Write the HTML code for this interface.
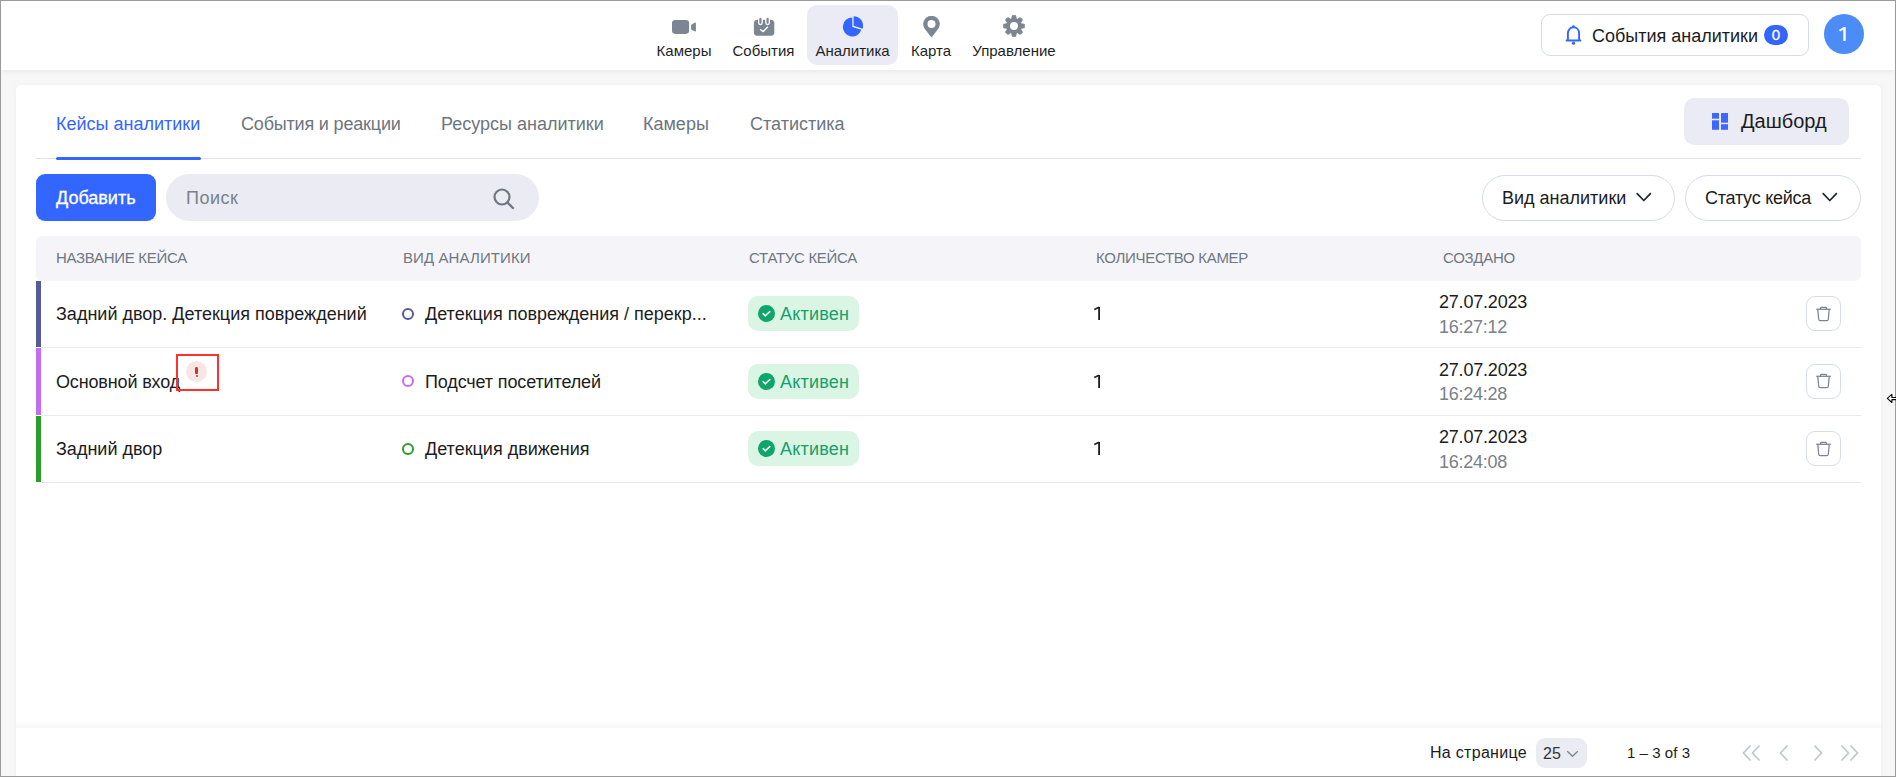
<!DOCTYPE html>
<html><head><meta charset="utf-8">
<style>
*{box-sizing:border-box;margin:0;padding:0}
html,body{width:1896px;height:777px;overflow:hidden}
body{font-family:"Liberation Sans",sans-serif;background:#f7f7f8;position:relative;color:#1c1c1e}
.frame{position:absolute;left:0;top:0;width:1896px;height:777px;border:1px solid #9b9b9b;pointer-events:none;z-index:50}
.abs{position:absolute}
.hdr{position:absolute;left:1px;top:1px;width:1894px;height:69px;background:#fff;box-shadow:0 1px 6px rgba(0,0,0,.075)}
.nav{position:absolute;top:0;height:70px;text-align:center;font-size:15px;color:#1f1f1f;white-space:nowrap}
.nav .lbl{position:absolute;left:0;right:0;top:42px;line-height:18px}
.nav svg{position:absolute;top:16px;left:50%;transform:translateX(-50%)}
.card{position:absolute;left:16px;top:85px;width:1865px;height:700px;background:#fff;border-radius:5px;box-shadow:0 0 5px rgba(0,0,0,.045)}
.tab{position:absolute;top:113px;font-size:18px;line-height:22px;color:#6c7580;white-space:nowrap}
.txt{position:absolute;white-space:nowrap}
.td{position:absolute;font-size:18px;line-height:22px;color:#1c1c1e;white-space:nowrap}
.chip{width:111px;height:35px;border-radius:10px;background:#dbf5e5;color:#13a06a;font-size:18px;line-height:22px;white-space:nowrap;letter-spacing:0.2px}
.th{position:absolute;top:249px;font-size:15px;letter-spacing:-0.3px;line-height:18px;color:#6f7782;white-space:nowrap}
</style></head><body>
<div class="hdr"></div>
<!-- nav -->
<div class="nav" style="left:648px;width:72px">
  <svg width="26" height="20" viewBox="0 0 26 20" style="top:18px"><rect x="1" y="2" width="17.1" height="13.9" rx="3.3" fill="#7b8692"/><path d="M20.1 7.1L23.9 4.6Q24.9 4.0 24.9 5.2V12.8Q24.9 14.0 23.9 13.4L20.1 11.6Z" fill="#7b8692"/></svg>
  <div class="lbl">Камеры</div>
</div>
<div class="nav" style="left:727px;width:73px">
  <svg width="22" height="22" viewBox="0 0 22 22" style="top:16px"><rect x="0.9" y="3.7" width="20.4" height="16.1" rx="3.5" fill="#7b8692"/><rect x="5" y="0.6" width="4.8" height="8.6" rx="2.4" fill="#fff"/><rect x="12.2" y="0.6" width="4.8" height="8.6" rx="2.4" fill="#fff"/><rect x="6.3" y="1.8" width="2.2" height="6.1" rx="1.1" fill="#7b8692"/><rect x="13.5" y="1.8" width="2.2" height="6.1" rx="1.1" fill="#7b8692"/><path d="M7.6 13.7L10.3 15.6L14.4 11.3" fill="none" stroke="#fff" stroke-width="1.4" stroke-linecap="round" stroke-linejoin="round"/></svg>
  <div class="lbl">События</div>
</div>
<div class="nav" style="left:807px;width:91px;top:5px;height:60px;background:#ebebf5;border-radius:10px">
  <svg width="22" height="22" viewBox="0 0 22 22" style="top:11px;margin-left:-0.6px"><path d="M11.3 10.9L11.3 1.4A9.5 9.5 0 1 0 20.335 13.836Z" fill="#3366ff"/><path d="M12.6 9.7L12.6 0.2A9.5 9.5 0 0 1 21.635 12.636Z" fill="#3366ff"/></svg>
  <div class="lbl" style="top:37px">Аналитика</div>
</div>
<div class="nav" style="left:904px;width:54px">
  <svg width="19" height="23" viewBox="0 0 19 23" style="top:16px;left:18px;transform:none"><path d="M9.5 21.2L3.2 12.9A8 8 0 1 1 15.8 12.9Z" fill="#7b8692" stroke="#7b8692" stroke-width="0.6" stroke-linejoin="round"/><circle cx="9.5" cy="8" r="4" fill="#fff"/></svg>
  <div class="lbl">Карта</div>
</div>
<div class="nav" style="left:966px;width:96px">
  <svg width="22" height="22" viewBox="0 0 22 22" style="top:15px"><g fill="#7b8692"><circle cx="11" cy="11" r="7.6"/><g id="t" stroke="#7b8692" stroke-width="0.8" stroke-linejoin="round"><path d="M9.3 0.6H12.7L13.6 5H8.4Z"/><path d="M9.3 21.4H12.7L13.6 17H8.4Z"/></g><use href="#t" transform="rotate(45 11 11)"/><use href="#t" transform="rotate(90 11 11)"/><use href="#t" transform="rotate(135 11 11)"/></g><circle cx="11" cy="11" r="4" fill="#fff"/></svg>
  <div class="lbl">Управление</div>
</div>

<!-- header right -->
<div class="abs" style="left:1541px;top:14px;width:268px;height:42px;border:1px solid #d6dbe6;border-radius:9px;background:#fff"></div>
<svg class="abs" style="left:1563px;top:25px" width="21" height="21" viewBox="0 0 21 21"><path d="M4.9 15.2V8.4C4.9 4.9 7.2 2.3 10.5 2.3S16.1 4.9 16.1 8.4V15.2" fill="none" stroke="#3366ff" stroke-width="1.9"/><path d="M3.6 15.4H17.4" stroke="#3366ff" stroke-width="2" stroke-linecap="round"/><circle cx="10.5" cy="1.7" r="1.4" fill="#3366ff"/><circle cx="10.5" cy="18.2" r="1.6" fill="#3366ff"/></svg>
<div class="txt" style="left:1592px;top:25px;font-size:18px;line-height:22px;color:#1c1c1e">События аналитики</div>
<div class="abs" style="left:1764px;top:25px;width:24px;height:20px;border-radius:10px;background:#3366ff;color:#fff;font-size:15px;line-height:20px;text-align:center;-webkit-text-stroke:0.3px #fff">0</div>
<div class="abs" style="left:1824px;top:14px;width:40px;height:40px;border-radius:50%;background:#4b8cf7"></div><svg class="abs" style="left:1838px;top:26px" width="10" height="16" viewBox="0 0 10 16"><rect x="5.3" y="1" width="2.4" height="14" fill="#fff"/><path d="M1.5 4.6L7 1.6" stroke="#fff" stroke-width="1.9"/></svg>

<div class="card"></div>
<!-- tabs -->
<div class="tab" style="left:56px;color:#3366ff">Кейсы аналитики</div>
<div class="tab" style="left:241px;letter-spacing:-0.18px">События и реакции</div>
<div class="tab" style="left:441px">Ресурсы аналитики</div>
<div class="tab" style="left:643px">Камеры</div>
<div class="tab" style="left:750px">Статистика</div>
<div class="abs" style="left:36px;top:158px;width:1825px;height:1px;background:#dfe4ea"></div>
<div class="abs" style="left:56px;top:157px;width:145px;height:3px;border-radius:2px;background:#3366ff"></div>
<!-- dashboard btn -->
<div class="abs" style="left:1684px;top:98px;width:165px;height:47px;border-radius:10px;background:#ebebf5"></div>
<svg class="abs" style="left:1712px;top:113px" width="17" height="17" viewBox="0 0 17 17"><g fill="#3f67ff"><rect x="0" y="0" width="7" height="5.7"/><rect x="0" y="7.3" width="7" height="9.5"/><rect x="9" y="0" width="7" height="9.7"/><rect x="9" y="11.2" width="7" height="5.6"/></g></svg>
<div class="txt" style="left:1741px;top:109px;font-size:20px;line-height:24px;color:#1c1c1e">Дашборд</div>
<!-- toolbar -->
<div class="abs" style="left:36px;top:174px;width:120px;height:47px;border-radius:9px;background:#3366ff"></div>
<div class="txt" style="left:56px;top:187px;font-size:18px;line-height:22px;color:#fff;-webkit-text-stroke:0.3px #fff">Добавить</div>
<div class="abs" style="left:166px;top:174px;width:373px;height:47px;border-radius:24px;background:#ebebf3"></div>
<div class="txt" style="left:186px;top:187px;font-size:18px;line-height:22px;color:#7a8189;letter-spacing:0.5px">Поиск</div>
<svg class="abs" style="left:492px;top:187px" width="24" height="24" viewBox="0 0 24 24"><circle cx="10" cy="10" r="7.5" fill="none" stroke="#6f7780" stroke-width="2.2"/><path d="M15.5 15.5L21 21" stroke="#6f7780" stroke-width="2.4" stroke-linecap="round"/></svg>
<div class="abs" style="left:1482px;top:175px;width:193px;height:46px;border-radius:23px;border:1px solid #d6dbe6"></div>
<div class="txt" style="left:1502px;top:187px;font-size:18px;line-height:22px;color:#1c1c1e">Вид аналитики</div>
<svg class="abs" style="left:1635px;top:190px" width="18" height="13" viewBox="0 0 18 13"><path d="M2.2 3.7L8.8 10.5L15.4 3.7" fill="none" stroke="#22242e" stroke-width="1.7" stroke-linecap="round" stroke-linejoin="round"/></svg>
<div class="abs" style="left:1685px;top:175px;width:176px;height:46px;border-radius:23px;border:1px solid #d6dbe6"></div>
<div class="txt" style="left:1705px;top:187px;font-size:18px;line-height:22px;color:#1c1c1e;letter-spacing:-0.25px">Статус кейса</div>
<svg class="abs" style="left:1821px;top:190px" width="18" height="13" viewBox="0 0 18 13"><path d="M2.2 3.7L8.8 10.5L15.4 3.7" fill="none" stroke="#22242e" stroke-width="1.7" stroke-linecap="round" stroke-linejoin="round"/></svg>
<!-- table header -->
<div class="abs" style="left:36px;top:236px;width:1825px;height:45px;border-radius:6px;background:#f5f5f9"></div>
<div class="th" style="left:56px">НАЗВАНИЕ КЕЙСА</div>
<div class="th" style="left:403px;letter-spacing:0.1px">ВИД АНАЛИТИКИ</div>
<div class="th" style="left:749px">СТАТУС КЕЙСА</div>
<div class="th" style="left:1096px">КОЛИЧЕСТВО КАМЕР</div>
<div class="th" style="left:1443px">СОЗДАНО</div>
<!-- rows -->
<div class="abs" style="left:36px;top:281px;width:5px;height:66px;background:#535c94"></div>
<div class="abs" style="left:41px;top:347px;width:1820px;height:1px;background:#e8e8f0"></div>
<div class="td" style="left:56px;top:303px">Задний двор. Детекция повреждений</div>
<svg class="abs" style="left:401px;top:307px" width="14" height="14" viewBox="0 0 14 14"><circle cx="7" cy="7" r="5" fill="none" stroke="#535c94" stroke-width="2"/></svg>
<div class="td" style="left:425px;top:303px">Детекция повреждения / перекр...</div>
<div class="abs chip" style="left:748px;top:296px"><svg class="abs" style="left:10px;top:9px" width="17" height="17" viewBox="0 0 17 17"><circle cx="8.5" cy="8.5" r="8.5" fill="#0fa66b"/><path d="M5.2 8.7l2.2 2.1L11.8 6.5" fill="none" stroke="#fff" stroke-width="1.6" stroke-linecap="round" stroke-linejoin="round"/></svg><span class="abs" style="left:32px;top:7px">Активен</span></div>
<svg class="abs" style="left:1093px;top:306px" width="9" height="15" viewBox="0 0 9 15"><rect x="5.2" y="1" width="1.8" height="13" fill="#1c1c1e"/><path d="M1.3 3.5L6 1.3" stroke="#1c1c1e" stroke-width="1.5"/></svg>
<div class="td" style="left:1439px;top:291px;letter-spacing:-0.2px">27.07.2023</div>
<div class="td" style="left:1439px;top:316px;letter-spacing:-0.25px;color:#7b8089">16:27:12</div>
<div class="abs" style="left:1806px;top:296px;width:35px;height:35px;border:1px solid #d8dee8;border-radius:9px"></div>
<div class="abs" style="left:1815px;top:306px"><svg width="17" height="16" viewBox="0 0 17 16"><path d="M1.2 3.3H15.8" stroke="#7b8591" stroke-width="1.3"/><path d="M5.6 3V2.1c0-.5.3-.8.8-.8h4.2c.5 0 .8.3.8.8V3" fill="none" stroke="#7b8591" stroke-width="1.2"/><path d="M2.8 3.6L3.7 13.2c.1.9.6 1.4 1.5 1.4h6.6c.9 0 1.4-.5 1.5-1.4l.9-9.6" fill="none" stroke="#7b8591" stroke-width="1.25"/></svg></div>
<div class="abs" style="left:36px;top:348px;width:5px;height:67px;background:#c66cf2"></div>
<div class="abs" style="left:41px;top:415px;width:1820px;height:1px;background:#e8e8f0"></div>
<div class="td" style="left:56px;top:371px;letter-spacing:-0.15px">Основной вход</div>
<svg class="abs" style="left:401px;top:374px" width="14" height="14" viewBox="0 0 14 14"><circle cx="7" cy="7" r="5" fill="none" stroke="#c66cf2" stroke-width="2"/></svg>
<div class="td" style="left:425px;top:371px;letter-spacing:-0.13px">Подсчет посетителей</div>
<div class="abs chip" style="left:748px;top:364px"><svg class="abs" style="left:10px;top:9px" width="17" height="17" viewBox="0 0 17 17"><circle cx="8.5" cy="8.5" r="8.5" fill="#0fa66b"/><path d="M5.2 8.7l2.2 2.1L11.8 6.5" fill="none" stroke="#fff" stroke-width="1.6" stroke-linecap="round" stroke-linejoin="round"/></svg><span class="abs" style="left:32px;top:7px">Активен</span></div>
<svg class="abs" style="left:1093px;top:374px" width="9" height="15" viewBox="0 0 9 15"><rect x="5.2" y="1" width="1.8" height="13" fill="#1c1c1e"/><path d="M1.3 3.5L6 1.3" stroke="#1c1c1e" stroke-width="1.5"/></svg>
<div class="td" style="left:1439px;top:359px;letter-spacing:-0.2px">27.07.2023</div>
<div class="td" style="left:1439px;top:383px;letter-spacing:-0.25px;color:#7b8089">16:24:28</div>
<div class="abs" style="left:1806px;top:364px;width:35px;height:35px;border:1px solid #d8dee8;border-radius:9px"></div>
<div class="abs" style="left:1815px;top:373px"><svg width="17" height="16" viewBox="0 0 17 16"><path d="M1.2 3.3H15.8" stroke="#7b8591" stroke-width="1.3"/><path d="M5.6 3V2.1c0-.5.3-.8.8-.8h4.2c.5 0 .8.3.8.8V3" fill="none" stroke="#7b8591" stroke-width="1.2"/><path d="M2.8 3.6L3.7 13.2c.1.9.6 1.4 1.5 1.4h6.6c.9 0 1.4-.5 1.5-1.4l.9-9.6" fill="none" stroke="#7b8591" stroke-width="1.25"/></svg></div>
<div class="abs" style="left:36px;top:416px;width:5px;height:66px;background:#2a9d2a"></div>
<div class="abs" style="left:41px;top:482px;width:1820px;height:1px;background:#e8e8f0"></div>
<div class="td" style="left:56px;top:438px">Задний двор</div>
<svg class="abs" style="left:401px;top:442px" width="14" height="14" viewBox="0 0 14 14"><circle cx="7" cy="7" r="5" fill="none" stroke="#2a9d2a" stroke-width="2"/></svg>
<div class="td" style="left:425px;top:438px">Детекция движения</div>
<div class="abs chip" style="left:748px;top:431px"><svg class="abs" style="left:10px;top:9px" width="17" height="17" viewBox="0 0 17 17"><circle cx="8.5" cy="8.5" r="8.5" fill="#0fa66b"/><path d="M5.2 8.7l2.2 2.1L11.8 6.5" fill="none" stroke="#fff" stroke-width="1.6" stroke-linecap="round" stroke-linejoin="round"/></svg><span class="abs" style="left:32px;top:7px">Активен</span></div>
<svg class="abs" style="left:1093px;top:441px" width="9" height="15" viewBox="0 0 9 15"><rect x="5.2" y="1" width="1.8" height="13" fill="#1c1c1e"/><path d="M1.3 3.5L6 1.3" stroke="#1c1c1e" stroke-width="1.5"/></svg>
<div class="td" style="left:1439px;top:426px;letter-spacing:-0.2px">27.07.2023</div>
<div class="td" style="left:1439px;top:451px;letter-spacing:-0.25px;color:#7b8089">16:24:08</div>
<div class="abs" style="left:1806px;top:431px;width:35px;height:35px;border:1px solid #d8dee8;border-radius:9px"></div>
<div class="abs" style="left:1815px;top:441px"><svg width="17" height="16" viewBox="0 0 17 16"><path d="M1.2 3.3H15.8" stroke="#7b8591" stroke-width="1.3"/><path d="M5.6 3V2.1c0-.5.3-.8.8-.8h4.2c.5 0 .8.3.8.8V3" fill="none" stroke="#7b8591" stroke-width="1.2"/><path d="M2.8 3.6L3.7 13.2c.1.9.6 1.4 1.5 1.4h6.6c.9 0 1.4-.5 1.5-1.4l.9-9.6" fill="none" stroke="#7b8591" stroke-width="1.25"/></svg></div>
<!-- annotation -->
<div class="abs" style="left:186px;top:361px;width:21px;height:21px;border-radius:50%;background:#f8e6e6"></div>
<div class="abs" style="left:195.4px;top:366.5px;width:2.8px;height:7.2px;border-radius:1.4px 1.4px 1px 1px;background:#c9382e"></div>
<div class="abs" style="left:195.5px;top:374.5px;width:2.6px;height:2.4px;border-radius:1px;background:#c9382e"></div>
<div class="abs" style="left:176px;top:354px;width:43px;height:37px;border:2px solid #ff3030;z-index:5"></div>
<!-- footer -->
<div class="abs" style="left:16px;top:721px;width:1865px;height:7px;background:linear-gradient(to bottom,rgba(0,0,0,0),rgba(0,0,0,.03))"></div>
<div class="txt" style="left:1430px;top:743px;font-size:16px;line-height:20px;color:#1c1c1e;letter-spacing:0.3px">На странице</div>
<div class="abs" style="left:1536px;top:738px;width:51px;height:30px;border-radius:9px;background:#ebebf3"></div>
<div class="txt" style="left:1543px;top:743.5px;font-size:16px;line-height:20px;color:#333">25</div>
<svg class="abs" style="left:1566px;top:750px" width="13" height="8" viewBox="0 0 13 8"><path d="M1.2 1.2L6.5 6.3L11.8 1.2" fill="none" stroke="#7b8591" stroke-width="1.3"/></svg>
<div class="txt" style="left:1627px;top:744px;font-size:15px;line-height:18px;color:#1c1c1e;letter-spacing:0.05px">1 – 3 of 3</div>
<svg class="abs" style="left:1740px;top:743px" width="124" height="20" viewBox="0 0 124 20"><g fill="none" stroke="#c3c8cf" stroke-width="1.8" stroke-linejoin="miter"><path d="M10.5 2.5L3.5 10L10.5 17.5M19.5 2.5L12.5 10L19.5 17.5"/><path d="M47.5 2.5L40.5 10L47.5 17.5"/><path d="M74.5 2.5L81.5 10L74.5 17.5"/><path d="M101.5 2.5L108.5 10L101.5 17.5M110.5 2.5L117.5 10L110.5 17.5"/></g></svg>
<!-- resize cursor -->
<svg class="abs" style="left:1885px;top:391px;z-index:60" width="11" height="14" viewBox="0 0 11 14"><path d="M2.3 7.4L6.9 3.3V6.4H12V8.6H6.9V11.5Z" fill="#fff" stroke="#000" stroke-width="1.05" stroke-linejoin="round"/></svg>
<div class="frame"></div>
</body></html>
